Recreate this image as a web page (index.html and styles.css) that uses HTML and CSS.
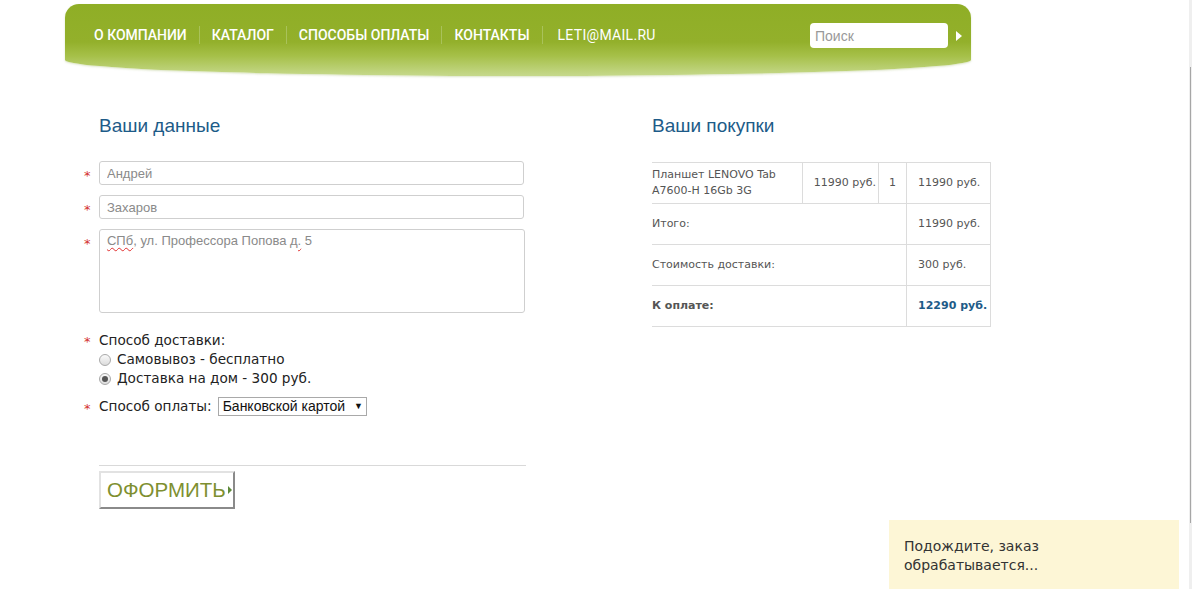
FILE: index.html
```html
<!DOCTYPE html>
<html lang="ru">
<head>
<meta charset="utf-8">
<title>Оформление заказа</title>
<link rel="stylesheet" href="styles.css">
</head>
<body>
<div class="page">
  <header class="topbar">
    <nav class="menu">
      <a class="menu-item" href="#">О компании</a>
      <span class="sep"></span>
      <a class="menu-item" href="#">Каталог</a>
      <span class="sep"></span>
      <a class="menu-item" href="#">Способы оплаты</a>
      <span class="sep"></span>
      <a class="menu-item" href="#">Контакты</a>
      <span class="sep"></span>
      <a class="menu-item mail" href="#">leti@mail.ru</a>
    </nav>
    <div class="search">
      <input class="search-input" type="text" placeholder="Поиск">
      <span class="search-go"></span>
    </div>
  </header>

  <main class="content">
    <section class="col-left">
      <h2 class="title">Ваши данные</h2>
      <div class="field"><span class="req">*</span><input class="inp" type="text" placeholder="Андрей"></div>
      <div class="field"><span class="req">*</span><input class="inp" type="text" placeholder="Захаров"></div>
      <div class="field"><span class="req">*</span><div class="ta"><span class="sp">СПб</span>, ул. Профессора Попова <span class="sp">д.</span> 5</div></div>

      <div class="field delivery"><span class="req">*</span>
        <div class="opts">
          <div class="lbl">Способ доставки:</div>
          <label class="radio"><span class="rb"></span>Самовывоз - бесплатно</label>
          <label class="radio"><span class="rb on"></span>Доставка на дом - 300 руб.</label>
        </div>
      </div>

      <div class="field pay"><span class="req">*</span>
        <span class="lbl">Способ оплаты:</span>
        <span class="sel">Банковской картой <span class="caret">▼</span></span>
      </div>

      <div class="line"></div>
      <button class="submit" type="button">ОФОРМИТЬ<span class="tri"></span></button>
    </section>

    <section class="col-right">
      <h2 class="title">Ваши покупки</h2>
      <table class="cart">
        <tr>
          <td class="c-name">Планшет LENOVO Tab A7600-H 16Gb 3G</td>
          <td class="c-price">11990 руб.</td>
          <td class="c-qty">1</td>
          <td class="c-sum">11990 руб.</td>
        </tr>
        <tr>
          <td class="c-name" colspan="3">Итого:</td>
          <td class="c-sum">11990 руб.</td>
        </tr>
        <tr>
          <td class="c-name" colspan="3">Стоимость доставки:</td>
          <td class="c-sum">300 руб.</td>
        </tr>
        <tr class="total">
          <td class="c-name" colspan="3">К оплате:</td>
          <td class="c-sum">12290 руб.</td>
        </tr>
      </table>
    </section>
  </main>

  <div class="notice">Подождите, заказ обрабатывается...</div>
  <div class="scroll"><span class="thumb"></span></div>
</div>
</body>
</html>
```

FILE: styles.css
```css
* { box-sizing: border-box; }
html, body { margin: 0; padding: 0; background: #fff; }
body { width: 1192px; height: 589px; overflow: hidden; font-family: "DejaVu Sans", Verdana, sans-serif; }

.page { position: relative; width: 1192px; height: 589px; padding-top: 4px; }

.topbar {
  margin: 0 0 0 65px;
  width: 906px;
  height: 72px;
  border-radius: 14px 14px 453px 453px / 14px 14px 16px 16px;
  background: linear-gradient(to bottom, #8fae26 0px, #93b02b 38px, #a6c049 52px, #c6d98c 72px);
  box-shadow: 0 1px 2px rgba(120, 150, 40, 0.25);
  display: flex;
  align-items: flex-start;
  justify-content: space-between;
  padding: 16px 9px 0 17px;
}

.menu { display: flex; align-items: center; height: 30px; }
.menu-item {
  color: #fff;
  text-decoration: none;
  text-transform: uppercase;
  font-family: "Roboto", "Liberation Sans", sans-serif;
  font-weight: 500;
  font-size: 14px;
  letter-spacing: 0;
  padding: 0 12px;
}
.menu-item:first-child { padding-left: 12px; }
.menu-item.mail { padding-left: 15px; font-weight: 400; letter-spacing: 0.3px; }
.sep { width: 1px; height: 18px; background: #a9c25a; }

.search { display: flex; align-items: center; gap: 8px; margin-top: 3px; }
.search-input {
  width: 138px;
  height: 25px;
  border: 0;
  border-radius: 4px;
  background: #fff;
  padding: 0 5px;
  font-family: "Liberation Sans", Arial, sans-serif;
  font-size: 14px;
  color: #555;
  outline: none;
}
.search-input::placeholder { color: #999; }
.search-go {
  width: 0; height: 0;
  border-left: 6px solid #fff;
  border-top: 5px solid transparent;
  border-bottom: 5px solid transparent;
}

.content { display: flex; padding: 39px 0 0 83px; }
.col-left { width: 442px; }
.col-right { margin-left: 127px; width: 340px; }

.title {
  margin: 0 0 24px 16px;
  font-family: "Liberation Sans", Arial, sans-serif;
  font-weight: 400;
  font-size: 19px;
  line-height: 22px;
  color: #1d5b88;
}
.col-right .title { margin: 0 0 25px 0; }

.field { display: flex; align-items: flex-start; margin-bottom: 10px; }

.req {
  width: 16px;
  height: 20px;
  color: #d4312e;
  font-size: 13px;
  line-height: 20px;
  padding-left: 1px;
  position: relative;
  top: 5px;
}
.inp {
  width: 425px;
  height: 24px;
  border: 1px solid #cfcfcf;
  border-radius: 3px;
  padding: 0 7px;
  font-family: "Liberation Sans", Arial, sans-serif;
  font-size: 13px;
  color: #555;
  outline: none;
}
.inp::placeholder { color: #8a8a8a; }
.ta {
  width: 427px;
  height: 84px;
  border: 1px solid #cfcfcf;
  border-radius: 3px;
  padding: 3px 7px;
  font-family: "Liberation Sans", Arial, sans-serif;
  font-size: 13px;
  line-height: 16px;
  color: #8a8a8a;
}
.sp { text-decoration: underline wavy #e03030; text-decoration-thickness: 1px; text-underline-offset: 2px; }

.delivery { margin-top: 18px; margin-bottom: 9px; }
.delivery .req { top: 1px; }
.opts { display: flex; flex-direction: column; }
.lbl { font-size: 13.6px; line-height: 19px; color: #222; }
.radio { display: flex; align-items: center; font-size: 13.6px; line-height: 19px; color: #222; }
.rb {
  width: 12px; height: 12px;
  border-radius: 50%;
  border: 1px solid #a9a9a9;
  background: linear-gradient(#fafafa, #dcdcdc);
  margin-right: 6px;
  position: relative;
}
.rb.on::after {
  content: "";
  position: absolute;
  left: 2px; top: 2px;
  width: 6px; height: 6px;
  border-radius: 50%;
  background: #555;
}

.pay { align-items: center; margin-top: -1px; }
.pay .req { top: 3px; }
.pay .lbl { margin-right: 6px; }
.sel {
  display: inline-flex;
  align-items: center;
  height: 19px;
  border: 1px solid #a9a9a9;
  padding: 0 3px 0 4px;
  font-family: "Liberation Sans", Arial, sans-serif;
  font-size: 14px;
  color: #111;
  background: #fff;
}
.caret { font-size: 9px; margin-left: 9px; }

.line { margin: 49px 0 0 16px; width: 427px; height: 1px; background: #d9d9d9; }

.submit {
  margin: 5px 0 0 16px;
  width: 136px;
  height: 38px;
  border: 2px solid;
  border-color: #e2e2e2 #8a8a8a #8a8a8a #e2e2e2;
  background: #fff;
  padding: 0 0 0 6px;
  font-family: "Liberation Sans", Arial, sans-serif;
  font-size: 20.5px;
  color: #7e8f30;
  text-align: left;
  display: flex;
  align-items: center;
}
.tri {
  width: 0; height: 0;
  margin-left: 2px;
  border-left: 4px solid #5e8a3a;
  border-top: 4px solid transparent;
  border-bottom: 4px solid transparent;
}

.cart {
  border-collapse: collapse;
  width: 339px;
  font-size: 11px;
  color: #555;
}
.cart td {
  border-top: 1px solid #dcdcdc;
  border-bottom: 1px solid #dcdcdc;
  height: 41px;
  line-height: 16px;
  vertical-align: middle;
}
.cart td + td { border-left: 1px solid #dcdcdc; }
.cart td:last-child { border-right: 1px solid #dcdcdc; }
.c-name { padding: 0 6px 0 0; width: 151px; }
.c-price { width: 76px; text-align: right; padding: 0 2px 0 0; }
.c-qty { width: 28px; text-align: center; }
.c-sum { width: 84px; padding: 0 0 0 11px; }
.total td { font-weight: bold; }
.total .c-sum { color: #1d5b88; }

.notice {
  position: absolute;
  left: 889px; top: 520px;
  width: 290px; height: 69px;
  background: #fdf6d6;
  padding: 17px 15px 0 15px;
  font-size: 14px;
  line-height: 19px;
  color: #333;
}

.scroll {
  position: absolute;
  right: 0; top: 0;
  width: 3px; height: 589px;
  background: #efefef;
}
.thumb {
  position: absolute;
  left: 1px; top: 67px;
  width: 1px; height: 456px;
  background: #a6a6a6;
}
```
